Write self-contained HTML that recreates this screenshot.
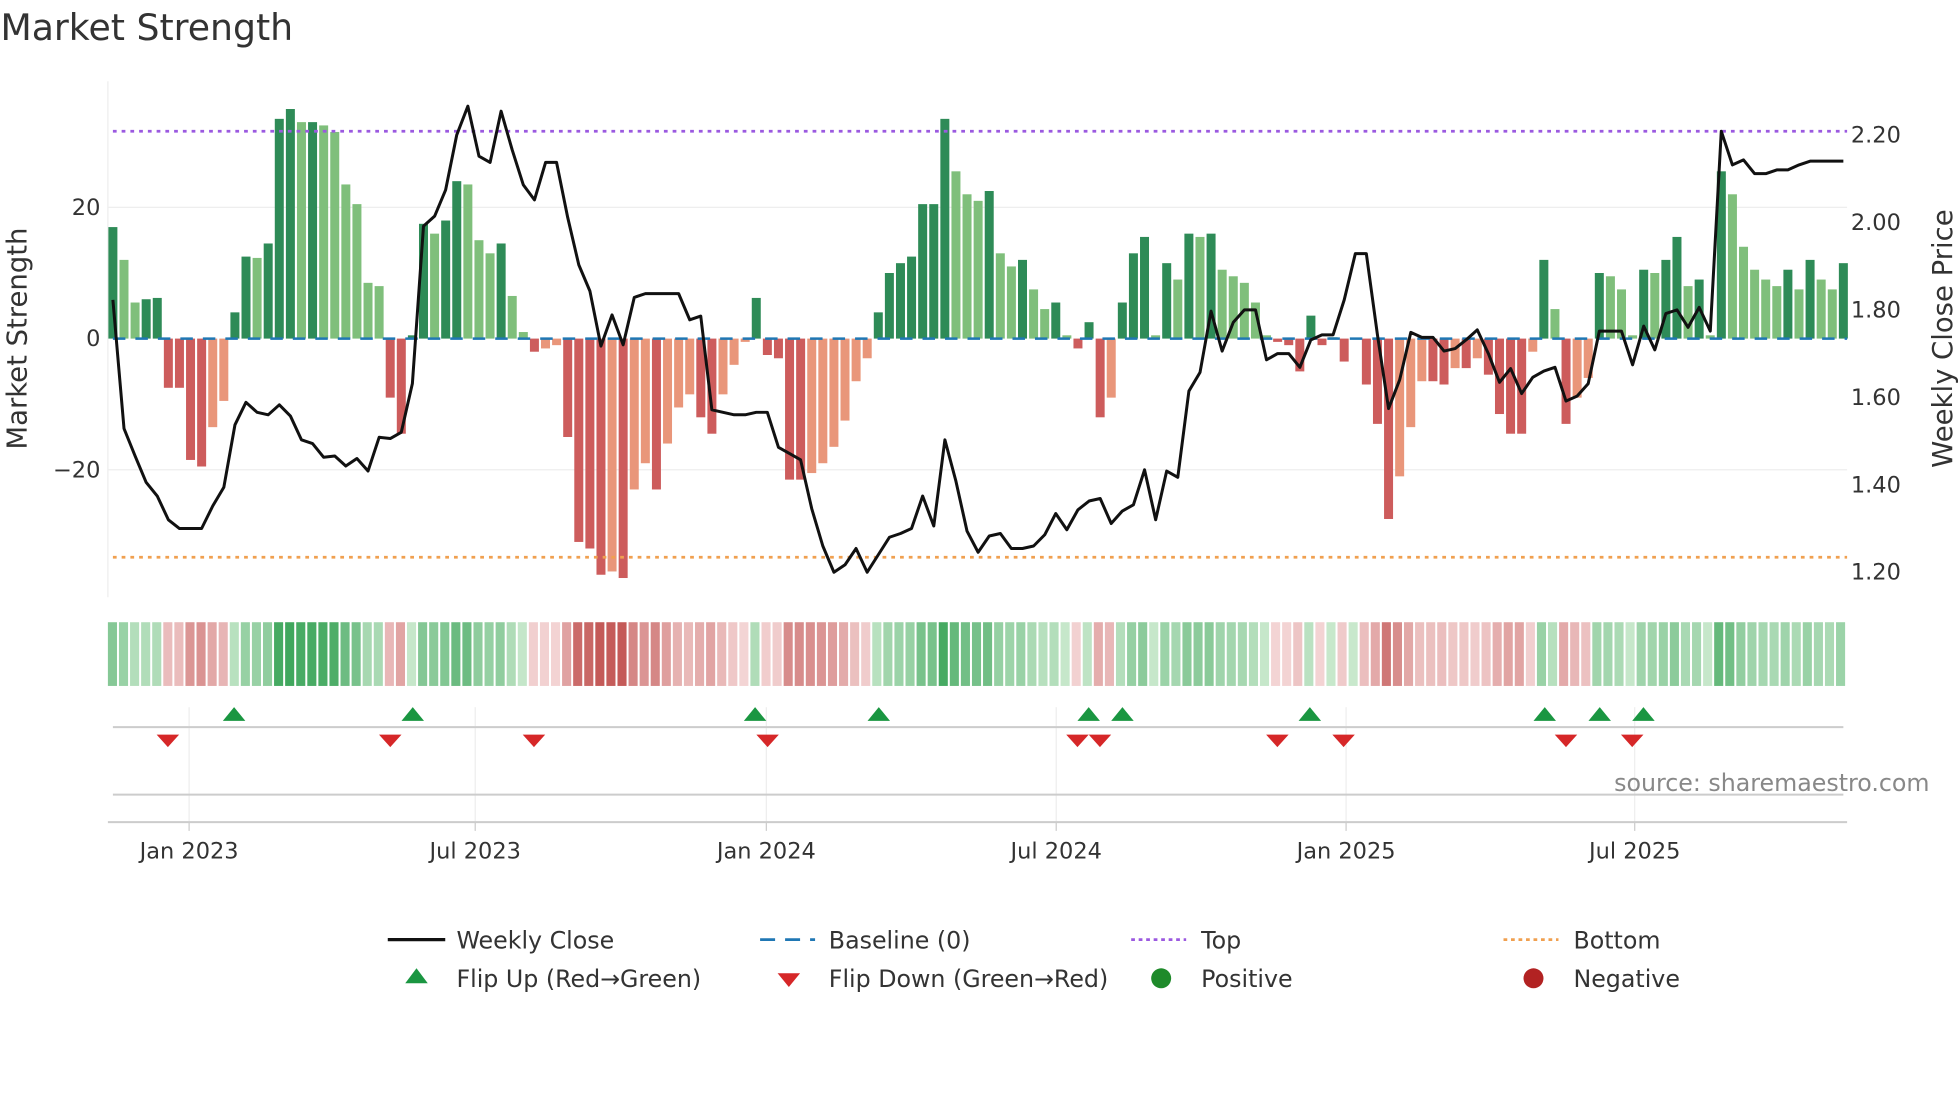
<!DOCTYPE html>
<html><head><meta charset="utf-8"><style>
html,body{margin:0;padding:0;background:#fff;width:1960px;height:1102px;overflow:hidden}
svg{display:block;font-family:"DejaVu Sans","Liberation Sans",sans-serif}
</style></head><body>
<svg id="s" width="1960" height="1102" viewBox="0 0 1568 882" xmlns="http://www.w3.org/2000/svg">
<rect width="1568" height="882" fill="#fff"/>
<text x="0" y="32" font-size="29" fill="#333">Market Strength</text>
<line x1="86" y1="65" x2="86" y2="478" stroke="#eee"/>
<line x1="86" y1="166" x2="1478" y2="166" stroke="#eee"/>
<line x1="86" y1="376" x2="1478" y2="376" stroke="#eee"/>
<g id="bars"></g>
<line x1="90" y1="271" x2="1478" y2="271" stroke="#1f77b4" stroke-width="2" stroke-dasharray="10,8"/>
<line x1="90" y1="105" x2="1478" y2="105" stroke="#9b59e0" stroke-width="2.2" stroke-dasharray="3,4"/>
<line x1="90" y1="446" x2="1478" y2="446" stroke="#f0a050" stroke-width="2.2" stroke-dasharray="3,4"/>
<polyline id="price" fill="none" stroke="#111" stroke-width="2.4" stroke-linejoin="round"/>
<g font-size="18" fill="#333">
<text x="80" y="172" text-anchor="end">20</text>
<text x="80" y="277" text-anchor="end">0</text>
<text x="80" y="382" text-anchor="end">−20</text>
<text x="1481" y="114">2.20</text>
<text x="1481" y="184">2.00</text>
<text x="1481" y="254">1.80</text>
<text x="1481" y="324">1.60</text>
<text x="1481" y="394">1.40</text>
<text x="1481" y="464">1.20</text>
</g>
<text transform="translate(21,271) rotate(-90)" font-size="22" fill="#333" text-anchor="middle">Market Strength</text>
<text transform="translate(1562,271) rotate(-90)" font-size="22" fill="#333" text-anchor="middle">Weekly Close Price</text>
<g id="strip"></g>
<g stroke="#eee">
<line x1="151" y1="566" x2="151" y2="658"/><line x1="380" y1="566" x2="380" y2="658"/>
<line x1="613" y1="566" x2="613" y2="658"/><line x1="845" y1="566" x2="845" y2="658"/>
<line x1="1077" y1="566" x2="1077" y2="658"/><line x1="1308" y1="566" x2="1308" y2="658"/>
</g>
<line x1="90" y1="582" x2="1475" y2="582" stroke="#ccc" stroke-width="1.6"/>
<line x1="90" y1="636" x2="1475" y2="636" stroke="#ccc" stroke-width="1.6"/>
<line x1="86" y1="658" x2="1478" y2="658" stroke="#ccc" stroke-width="1.6"/>
<g stroke="#ccc"><line x1="151" y1="658" x2="151" y2="665"/><line x1="380" y1="658" x2="380" y2="665"/><line x1="613" y1="658" x2="613" y2="665"/><line x1="845" y1="658" x2="845" y2="665"/><line x1="1077" y1="658" x2="1077" y2="665"/><line x1="1308" y1="658" x2="1308" y2="665"/></g>
<g id="mk"></g>
<text x="1544" y="633" font-size="19" fill="#888" text-anchor="end">source: sharemaestro.com</text>
<g font-size="18" fill="#333" text-anchor="middle">
<text x="151" y="687">Jan 2023</text><text x="380" y="687">Jul 2023</text><text x="613" y="687">Jan 2024</text>
<text x="845" y="687">Jul 2024</text><text x="1077" y="687">Jan 2025</text><text x="1308" y="687">Jul 2025</text>
</g>
<g font-size="19" fill="#333">
<line x1="310" y1="752" x2="356" y2="752" stroke="#111" stroke-width="2.6"/><text x="365" y="759">Weekly Close</text>
<line x1="608" y1="752" x2="652" y2="752" stroke="#1f77b4" stroke-width="2.2" stroke-dasharray="12,8"/><text x="663" y="759">Baseline (0)</text>
<line x1="905" y1="752" x2="949" y2="752" stroke="#9b59e0" stroke-width="2.2" stroke-dasharray="3,3"/><text x="961" y="759">Top</text>
<line x1="1203" y1="752" x2="1247" y2="752" stroke="#f0a050" stroke-width="2.2" stroke-dasharray="3,3"/><text x="1259" y="759">Bottom</text>
<polygon points="324,787 342,787 333,775" fill="#1a9641"/><text x="365" y="790">Flip Up (Red→Green)</text>
<polygon points="622,779 640,779 631,790" fill="#d62728"/><text x="663" y="790">Flip Down (Green→Red)</text>
<circle cx="929" cy="783" r="8" fill="#1e8a2a"/><text x="961" y="790">Positive</text>
<circle cx="1227" cy="783" r="8" fill="#b22222"/><text x="1259" y="790">Negative</text>
</g>
</svg>
<script>
var V=[17,12,5.5,6,6.2,-7.5,-7.5,-18.5,-19.5,-13.5,-9.5,4,12.5,12.3,14.5,33.5,35,33,33,32.5,31.5,23.5,20.5,8.5,8,-9,-14.5,0.5,17.5,16,18,24,23.5,15,13,14.5,6.5,1,-2,-1.5,-1,-15,-31,-32,-36,-35.5,-36.5,-23,-19,-23,-16,-10.5,-8.5,-12,-14.5,-8.5,-4,-0.5,6.2,-2.5,-3,-21.5,-21.5,-20.5,-19,-16.5,-12.5,-6.5,-3,4,10,11.5,12.5,20.5,20.5,33.5,25.5,22,21,22.5,13,11,12,7.5,4.5,5.5,0.5,-1.5,2.5,-12,-9,5.5,13,15.5,0.5,11.5,9,16,15.5,16,10.5,9.5,8.5,5.5,0.5,-0.5,-1,-5,3.5,-1,0.2,-3.5,0,-7,-13,-27.5,-21,-13.5,-6.5,-6.5,-7,-4.5,-4.5,-3,-5.5,-11.5,-14.5,-14.5,-2,12,4.5,-13,-9,-6,10,9.5,7.5,0.5,10.5,10,12,15.5,8,9,0.5,25.5,22,14,10.5,9,8,10.5,7.5,12,9,7.5,11.5];
var P=[240,343,365,386,397,416,423,423,423,405,390,340,322,330,332,324,333,352,355,366,365,373,367,377,350,351,346,307,181,173,152,108,85,125,130,89,120,148,160,130,130,174,212,233,277,252,276,238,235,235,235,235,256,253,328,330,332,332,330,330,358,363,368,407,437,458,452,439,458,444,430,427,423,397,421,352,385,425,442,429,427,439,439,437,428,411,424,408,401,399,419,409,404,376,416,377,382,313,298,249,281,258,248,248,288,283,283,294,272,268,268,240,203,203,268,327,304,266,270,270,281,279,272,264,283,306,295,315,302,297,294,321,317,307,265,265,265,292,261,280,251,248,262,246,265,105,132,128,139,139,136,136,132,129,129,129,129];
var NS="http://www.w3.org/2000/svg",n=V.length,x0=90,x1=1475,dx=(x1-x0)/(n-1);
function el(t,a,p){var e=document.createElementNS(NS,t);for(var k in a)e.setAttribute(k,a[k]);p.appendChild(e);return e}
var B=document.getElementById('bars'),S=document.getElementById('strip');
function mix(a,b,t){var r=[];for(var i=0;i<3;i++)r.push(Math.round(a[i]+(b[i]-a[i])*t));return 'rgb('+r+')'}
for(var i=0;i<n;i++){var v=V[i],x=x0+i*dx,pv=i?V[i-1]:0;
 var dark=Math.abs(v)>=Math.abs(pv)||(pv*v<0);
 var c=v>=0?(dark?'#2e8b57':'#7fbf7b'):(dark?'#cd5c5c':'#e9967a');
 var h=Math.abs(v)*5.25;el('rect',{x:x-3.6,y:v>=0?271-h:271,width:7.2,height:Math.max(h,0.5),fill:c},B);
 var t=Math.min(Math.abs(v)/36,1);
 var sc=v>=0?mix([200,232,204],[60,165,90],t):mix([244,214,214],[196,90,88],t);
 el('rect',{x:86+i*(1392/n),y:498,width:1392/n-1.6,height:51,fill:sc},S);}
var pts=[];var m=P.length,ddx=(x1-x0)/(m-1);for(var i=0;i<m;i++)pts.push((x0+i*ddx).toFixed(1)+','+P[i]);
document.getElementById('price').setAttribute('points',pts.join(' '));
var M=document.getElementById('mk');
[187,330,604,703,871,898,1048,1236,1280,1315].forEach(function(x){el('polygon',{points:(x-9)+',577 '+(x+9)+',577 '+x+',566',fill:'#1a9641'},M)});
[134,312,427,614,862,880,1022,1075,1253,1306].forEach(function(x){el('polygon',{points:(x-9)+',588 '+(x+9)+',588 '+x+',598',fill:'#d62728'},M)});
</script>
</body></html>
